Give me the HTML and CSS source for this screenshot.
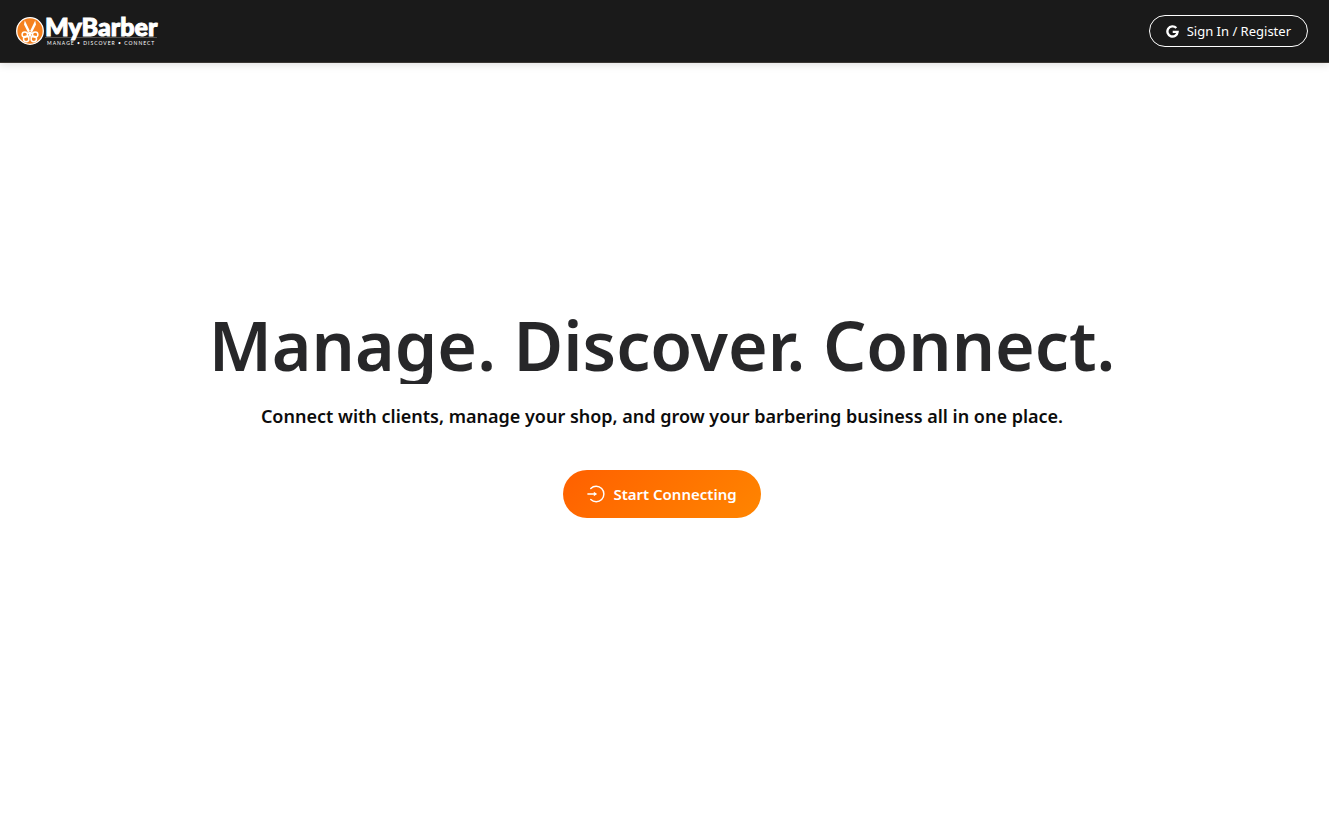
FILE: index.html
```html
<!DOCTYPE html>
<html lang="en">
<head>
<meta charset="utf-8">
<meta name="viewport" content="width=device-width, initial-scale=1">
<title>MyBarber</title>
<link rel="stylesheet" href="styles.css">
</head>
<body>
<header class="navbar">
  <a class="brand" href="#" aria-label="MyBarber">
    <svg class="brand-mark" viewBox="0 0 28 28" aria-hidden="true">
      <circle cx="14" cy="14" r="13.3" fill="#f58220" stroke="#fff" stroke-width="1.3"/>
      <path d="M8.8 3.6 L8 7.5 L12 15.5 L13.9 14 Z M19.2 3.6 L20 7.5 L16 15.5 L14.1 14 Z" fill="#fff"/>
      <g fill="none" stroke="#fff" stroke-width="1.5">
        <circle cx="8.8" cy="17.6" r="2.7"/>
        <circle cx="19.2" cy="17.6" r="2.7"/>
        <circle cx="10.2" cy="22" r="2.7"/>
        <circle cx="17.8" cy="22" r="2.7"/>
        <path d="M11.2 16.4 L14 15.6 L16.8 16.4 M14 15.6 L12.6 20.5 M14 15.6 L15.4 20.5"/>
      </g>
    </svg>
    <span class="brand-text">
      <span class="brand-name">MyBarber</span>
      <span class="brand-tag"><span>MANAGE</span><span>•</span><span>DISCOVER</span><span>•</span><span>CONNECT</span></span>
    </span>
  </a>
  <button class="sign-in" type="button">
    <svg class="google-icon" viewBox="0 0 12 12" aria-hidden="true">
      <path d="M9.5 2.8 A4.7 4.7 0 1 0 10.7 6.3 H6.2" fill="none" stroke="#fff" stroke-width="2.2"/>
    </svg>
    Sign In / Register
  </button>
</header>
<main class="hero">
  <h1 class="hero-title">Manage. Discover. Connect.</h1>
  <p class="hero-text">Connect with clients, manage your shop, and grow your barbering business all in one place.</p>
  <button class="start" type="button">
    <svg class="start-icon" viewBox="0 0 20 20" aria-hidden="true">
      <g fill="none" stroke="#fff" stroke-width="1.6" stroke-linecap="round">
        <path d="M4.2 3.8 A8.6 8.6 0 1 1 4.2 16.2"/>
        <path d="M1 10 H9.5"/>
      </g>
      <path d="M7.6 7.4 L11.2 10 L7.6 12.6 Z" fill="#fff"/>
    </svg>
    Start Connecting
  </button>
</main>
</body>
</html>
```
FILE: styles.css
```css
* {
  box-sizing: border-box;
}

body {
  margin: 0;
  min-height: 100vh;
  display: flex;
  flex-direction: column;
  background: #fff;
  font-family: "Segoe UI", "Noto Sans", "Open Sans", sans-serif;
}

.navbar {
  display: flex;
  align-items: center;
  justify-content: space-between;
  padding: 15px 21px 15px 16px;
  background: #1a1a1a;
  border-bottom: 1px solid #3b3733;
  box-shadow: 0 2px 8px rgba(0, 0, 0, 0.12);
}

.brand {
  display: flex;
  align-items: center;
  gap: 1px;
  color: #fff;
  text-decoration: none;
}

.brand-mark {
  width: 28px;
  height: 28px;
}

.brand-text {
  display: flex;
  flex-direction: column;
  font-family: Lato, sans-serif;
}

.brand-name {
  border-bottom: 1px solid #55524f;
  font-size: 25px;
  font-weight: 900;
  line-height: 22px;
  -webkit-text-stroke: 1px #fff;
}

.brand-tag {
  display: flex;
  justify-content: space-between;
  padding: 1px 2px 0;
  font-size: 5px;
  font-weight: 400;
  line-height: 8px;
  letter-spacing: 1px;
  white-space: nowrap;
}

.sign-in,
.start {
  display: flex;
  align-items: center;
  gap: 8px;
  color: #fff;
  font-family: inherit;
  cursor: pointer;
}

.sign-in {
  height: 32px;
  padding: 0 16px;
  border: 1px solid #fff;
  border-radius: 16px;
  background: transparent;
  font-size: 13px;
}

.google-icon {
  width: 13px;
  height: 13px;
}

.hero {
  flex: 1;
  display: flex;
  flex-direction: column;
  align-items: center;
  justify-content: center;
  padding: 0 5px 50px 0;
  text-align: center;
}

.hero-title {
  margin: 0 0 20px;
  padding-bottom: 6px;
  background: #272729;
  background-clip: text;
  -webkit-background-clip: text;
  color: transparent;
  font-size: 68px;
  font-weight: 600;
  line-height: 66px;
}

.hero-text {
  margin: 0 0 42px;
  color: #0c0c0c;
  font-size: 18px;
  font-weight: 600;
  line-height: 24px;
}

.start {
  height: 48px;
  padding: 0 24px;
  border: 0;
  border-radius: 24px;
  background: linear-gradient(135deg, #ff6000, #ff8500);
  font-size: 15px;
  font-weight: 600;
}

.start-icon {
  width: 18px;
  height: 18px;
}
```
